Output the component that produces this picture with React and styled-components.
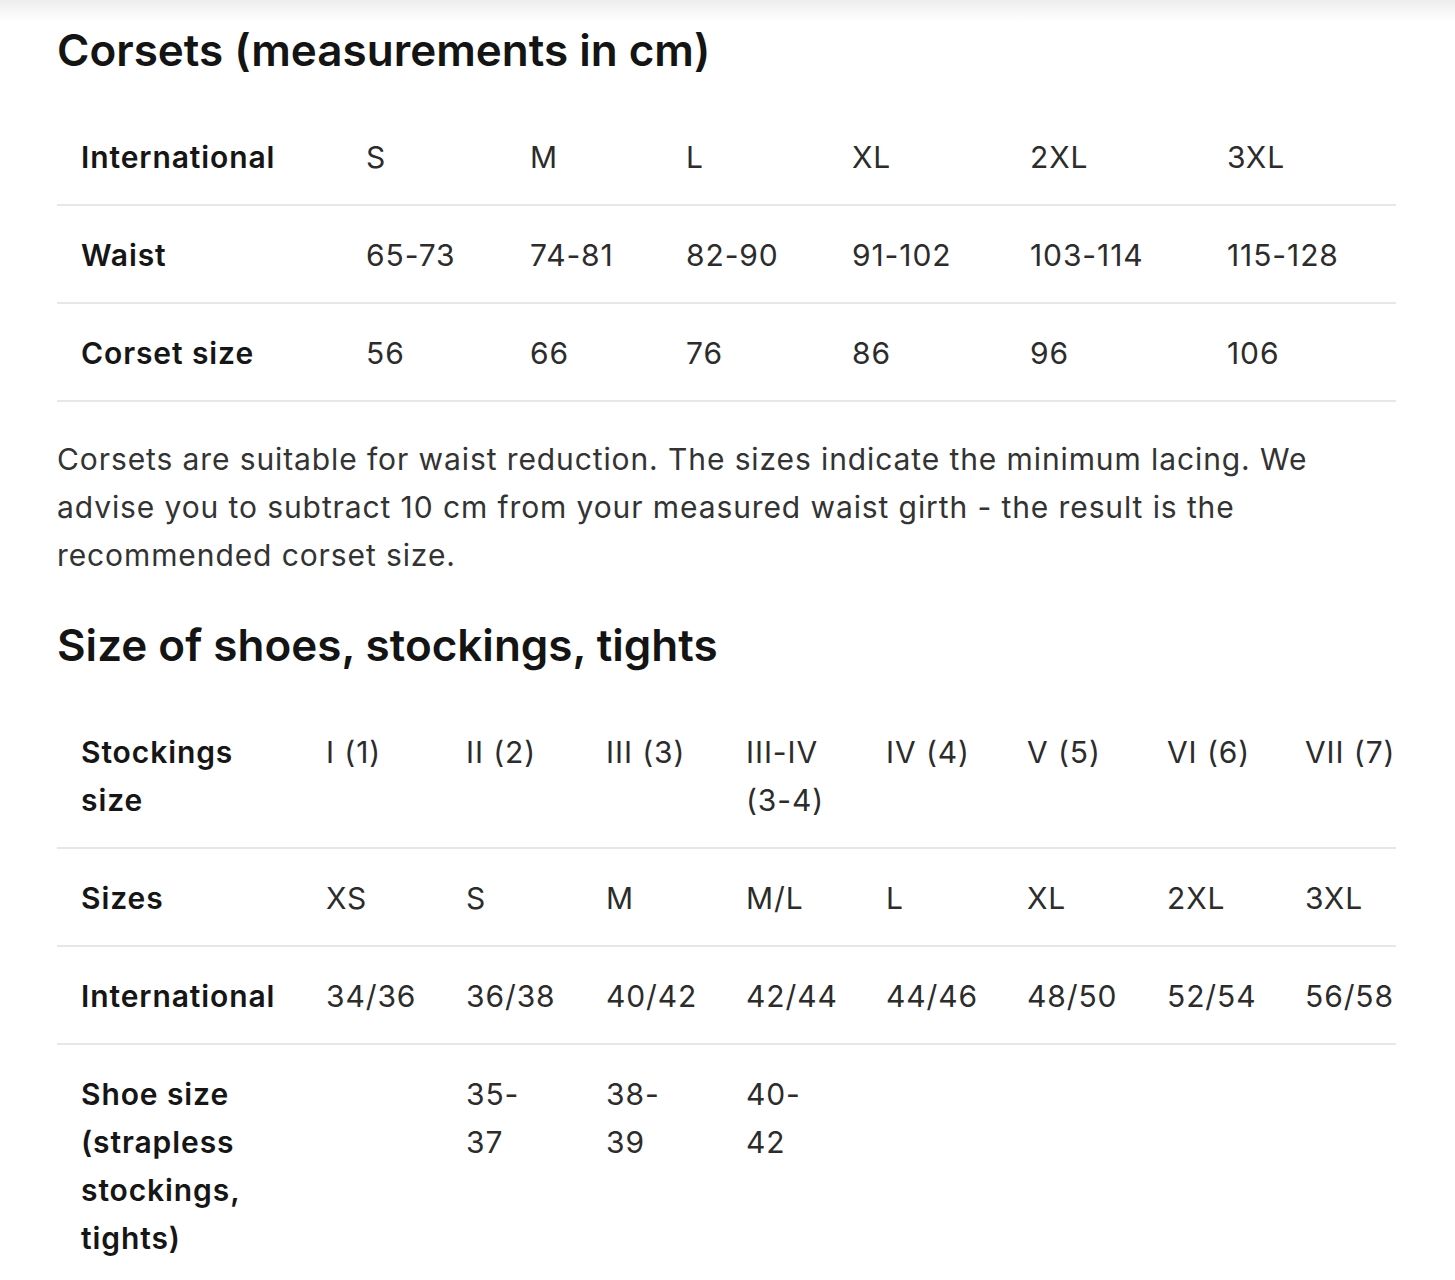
import React from 'react';
import styled, { createGlobalStyle } from 'styled-components';

const GlobalStyle = createGlobalStyle`
  body {
    margin: 0;
    background: #ffffff;
    font-family: Inter, "Noto Sans", "Liberation Sans", sans-serif;
    color: #1b1b1b;
  }
`;

const corsetCols = [285, 164, 156, 166, 178, 197, 193];
const corsetRows = [
  ['International', 'S', 'M', 'L', 'XL', '2XL', '3XL'],
  ['Waist', '65-73', '74-81', '82-90', '91-102', '103-114', '115-128'],
  ['Corset size', '56', '66', '76', '86', '96', '106'],
];

const shoeCols = [245, 140, 140, 140, 140, 141, 140, 138, 115];
const shoeRows = [
  ['Stockings\nsize', 'I (1)', 'II (2)', 'III (3)', 'III-IV\n(3-4)', 'IV (4)', 'V (5)', 'VI (6)', 'VII (7)'],
  ['Sizes', 'XS', 'S', 'M', 'M/L', 'L', 'XL', '2XL', '3XL'],
  ['International', '34/36', '36/38', '40/42', '42/44', '44/46', '48/50', '52/54', '56/58'],
  ['Shoe size\n(strapless\nstockings,\ntights)', '', '35-\n37', '38-\n39', '40-\n42', '', '', '', ''],
];

const SizeTable = ({ cols, rows }) => (
  <Table>
    <colgroup>
      {cols.map((w, i) => (
        <col key={i} style={{ width: w }} />
      ))}
    </colgroup>
    <tbody>
      {rows.map((row, r) => (
        <Row key={r}>
          {row.map((cell, c) =>
            c === 0 ? <Label key={c}>{cell}</Label> : <Cell key={c}>{cell}</Cell>
          )}
        </Row>
      ))}
    </tbody>
  </Table>
);

export default function App() {
  return (
    <>
      <GlobalStyle />
      <TopShade />
      <Page>
        <Heading>Corsets (measurements in cm)</Heading>
        <SizeTable cols={corsetCols} rows={corsetRows} />
        <Note>
          Corsets are suitable for waist reduction. The sizes indicate the minimum lacing. We
          advise you to subtract 10 cm from your measured waist girth - the result is the
          recommended corset size.
        </Note>
        <Heading>Size of shoes, stockings, tights</Heading>
        <SizeTable cols={shoeCols} rows={shoeRows} />
      </Page>
    </>
  );
}

const TopShade = styled.div`
  height: 22px;
  background: linear-gradient(#ededed, #ffffff);
`;

const Page = styled.main`
  padding: 0 59px 40px 57px;
`;

const Heading = styled.h2`
  margin: 3px 0 33px;
  font-size: 44px;
  line-height: 50px;
  font-weight: 600;
  color: #141414;
  letter-spacing: 0;
`;

const Table = styled.table`
  width: 1339px;
  table-layout: fixed;
  border-collapse: collapse;
`;

const Row = styled.tr`
  border-bottom: 2px solid #e7e7e7;
`;

const Label = styled.th`
  padding: 25px 0 23px 24px;
  text-align: left;
  vertical-align: top;
  font-size: 30px;
  line-height: 48px;
  font-weight: 600;
  letter-spacing: 0.9px;
  color: #161616;
  white-space: pre-line;
`;

const Cell = styled.td`
  padding: 25px 0 23px 24px;
  vertical-align: top;
  font-size: 30px;
  line-height: 48px;
  font-weight: 400;
  letter-spacing: 0.9px;
  color: #2c2c2c;
  white-space: pre;
`;

const Note = styled.p`
  margin: 33px 0 41px;
  font-size: 30px;
  line-height: 48px;
  letter-spacing: 0.9px;
  color: #333333;
  max-width: 1290px;
`;
